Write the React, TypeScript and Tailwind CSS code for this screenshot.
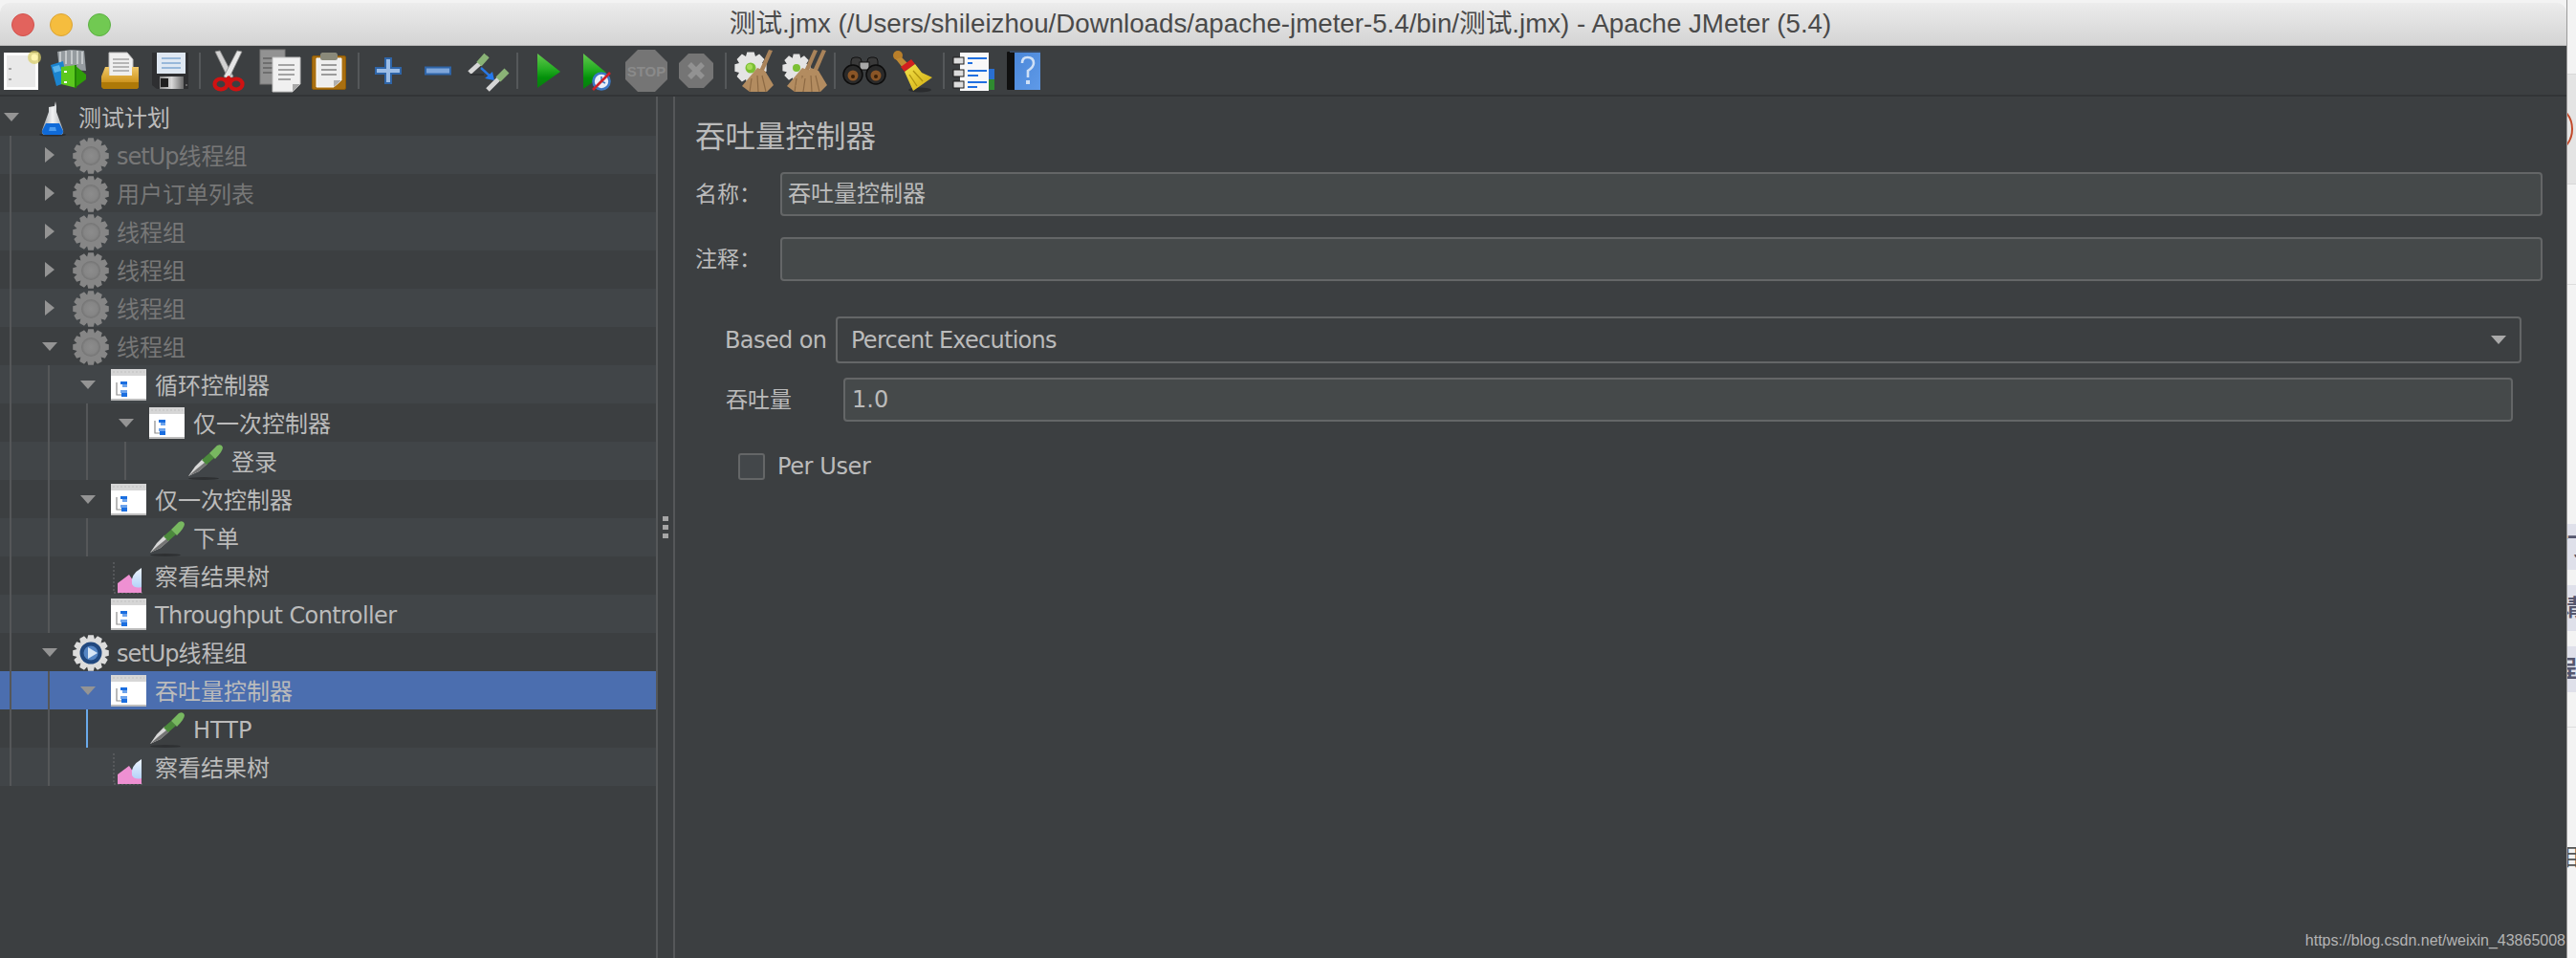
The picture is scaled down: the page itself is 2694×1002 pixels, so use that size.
const Svg = ({ w = 44, h = 44, children }: { w?: number; h?: number; children: React.ReactNode }) => (
  <svg width={w} height={h} viewBox={`0 0 ${w} ${h}`} className="overflow-visible shrink-0">
    {children}
  </svg>
);

function gearPoints(cx: number, cy: number, outer: number, inner: number, teeth = 12) {
  const pts: string[] = [];
  const step = (Math.PI * 2) / teeth;
  for (let i = 0; i < teeth; i++) {
    const a = i * step;
    const offsets = [
      [-0.5, inner],
      [-0.28, outer],
      [0.28, outer],
      [0.5, inner],
    ];
    for (const [o, r] of offsets) {
      const t = a + o * step;
      pts.push(`${(cx + Math.cos(t) * r).toFixed(1)},${(cy + Math.sin(t) * r).toFixed(1)}`);
    }
  }
  return pts.join(" ");
}

const Gradients = () => (
  <svg width="0" height="0" className="absolute">
    <defs>
      <linearGradient id="greenPlay" x1="0" y1="0" x2="0" y2="1">
        <stop offset="0" stopColor="#63c84e" />
        <stop offset="0.45" stopColor="#25ad23" />
        <stop offset="0.7" stopColor="#03900a" />
        <stop offset="1" stopColor="#0a7d10" />
      </linearGradient>
      <linearGradient id="folder" x1="0" y1="0" x2="0" y2="1">
        <stop offset="0" stopColor="#f0c868" />
        <stop offset="0.6" stopColor="#d49c28" />
        <stop offset="1" stopColor="#b57c08" />
      </linearGradient>
      <linearGradient id="metal" x1="0" y1="0" x2="1" y2="0">
        <stop offset="0" stopColor="#8a8a8a" />
        <stop offset="0.5" stopColor="#d8d8d8" />
        <stop offset="1" stopColor="#6a6a6a" />
      </linearGradient>
      <linearGradient id="sweepHead" x1="0" y1="0" x2="1" y2="1">
        <stop offset="0" stopColor="#f4e24a" />
        <stop offset="1" stopColor="#d0ac10" />
      </linearGradient>
      <linearGradient id="leaf" x1="0" y1="0" x2="0" y2="1">
        <stop offset="0" stopColor="#eef5ff" />
        <stop offset="1" stopColor="#b4d2f8" />
      </linearGradient>
      <linearGradient id="helpBook" x1="0" y1="0" x2="1" y2="1">
        <stop offset="0" stopColor="#4a86d8" />
        <stop offset="1" stopColor="#5f9ae8" />
      </linearGradient>
      <linearGradient id="flaskGlass" x1="0" y1="0" x2="1" y2="0">
        <stop offset="0" stopColor="#9a9fa4" />
        <stop offset="0.5" stopColor="#f2f3f4" />
        <stop offset="1" stopColor="#a8acb0" />
      </linearGradient>
      <radialGradient id="disabledHub">
        <stop offset="0" stopColor="#8c8c8c" />
        <stop offset="0.7" stopColor="#858585" />
        <stop offset="1" stopColor="#737373" />
      </radialGradient>
    </defs>
  </svg>
);

const NewIcon = () => (
  <Svg>
    <rect x="7.5" y="4.5" width="33" height="36" fill="#e9e9e9" stroke="#fdfdfd" strokeWidth="3" />
    <circle cx="38" cy="8" r="7" fill="#d9cf6a" opacity="0.75" />
    <circle cx="38" cy="8" r="3.5" fill="#fff6b0" />
    <rect x="11" y="19" width="3" height="2" fill="#a8a8a8" />
    <rect x="11" y="30" width="3" height="2" fill="#a8a8a8" />
  </Svg>
);

const TemplateIcon = () => (
  <Svg>
    <path d="M10 2 L24 0 L38 1 L40 22 L12 20 Z" fill="#969ca0" />
    <path d="M13 2 V15 M19 1 V15 M25 1 V15 M31 1 V15 M36 2 V15" stroke="#c4c8ca" strokeWidth="2" />
    <path d="M3 16 L16 12 L20 34 L9 38 Z" fill="#1b84cf" />
    <path d="M5 18 L12 16 L14 22 L7 24 Z" fill="#5ab4ec" />
    <path d="M14 18 L30 16 V40 L14 36 Z" fill="#5cc81e" />
    <path d="M28 16 L40 26 L40 31 L28 40 Z" fill="#2f9e08" />
    <path d="M28 16 H30 V40 H28 Z" fill="#248407" />
    <rect x="17" y="22" width="3" height="2" fill="#fff" />
    <rect x="17" y="33" width="3" height="2" fill="#fff" />
  </Svg>
);

const OpenIcon = () => (
  <Svg>
    <path d="M12 3 H31 L37 10 V28 H12 Z" fill="#efefef" stroke="#bdbdbd" />
    <path d="M16 10 H33 M16 14 H33 M16 18 H33 M16 22 H33" stroke="#a4a4a4" strokeWidth="1.6" />
    <path d="M8 18 H12 V27 H36 V18 H43 V38 Q43 41 40 41 H8 Q4 41 4 37 V28 Z" fill="url(#folder)" />
    <path d="M4 34 H43 V38 Q43 41 40 41 H8 Q4 41 4 37 Z" fill="#ae7908" />
  </Svg>
);

const SaveIcon = () => (
  <Svg>
    <path d="M5 3 H43 V41 H10 L5 37 Z" fill="#2e2f31" />
    <rect x="10" y="3" width="30" height="22" fill="#dfe8f2" />
    <path d="M15 9 H35 M15 14 H35 M15 19 H35" stroke="#98b8da" strokeWidth="2" />
    <rect x="13" y="28" width="25" height="13" fill="url(#metal)" />
    <rect x="14" y="30" width="8" height="9" fill="#1f1f1f" />
    <rect x="40" y="36" width="2" height="2" fill="#666" />
  </Svg>
);

const CutIcon = () => (
  <Svg>
    <path d="M9 2 L14 1 L28 28 L23 31 Z" fill="#d2d2d2" stroke="#8a8a8a" strokeWidth="0.8" />
    <path d="M37 2 L32 1 L18 28 L23 31 Z" fill="#e6e6e6" stroke="#8a8a8a" strokeWidth="0.8" />
    <ellipse cx="15" cy="36" rx="6.5" ry="5.5" fill="none" stroke="#d01212" strokeWidth="4.2" />
    <ellipse cx="31" cy="36" rx="6.5" ry="5.5" fill="none" stroke="#d01212" strokeWidth="4.2" />
    <path d="M18 31 L23 27 L28 31 L23 34 Z" fill="#d01212" />
  </Svg>
);

const CopyIcon = () => (
  <Svg>
    <rect x="4" y="0" width="26" height="36" fill="#929292" stroke="#7a7a7a" />
    <path d="M7 9 H17 M7 14 H17 M7 19 H17 M7 24 H17" stroke="#6e6e6e" strokeWidth="2" />
    <path d="M17 8 H46 V36 L38 44 H17 Z" fill="#f0f0f0" stroke="#bfbfbf" />
    <path d="M38 44 V36 H46 Z" fill="#a8a8a8" />
    <path d="M23 16 H40 M23 21 H40 M23 26 H40 M23 31 H36" stroke="#a4a4a4" strokeWidth="1.8" />
  </Svg>
);

const PasteIcon = () => (
  <Svg>
    <rect x="6.5" y="6.5" width="35" height="35" rx="1.5" fill="#a96f10" stroke="#8c5a08" />
    <path d="M11 9 H37 V32 L29 39 H11 Z" fill="#eeeeee" stroke="#ffffff" />
    <path d="M29 39 V32 H37 Z" fill="#b0b0b0" />
    <rect x="15" y="3" width="18" height="8" rx="2.5" fill="#8a8a7a" />
    <path d="M16 16 H32 M16 21 H32 M16 26 H32" stroke="#9c9c9c" strokeWidth="1.8" />
  </Svg>
);

const PlusIcon = () => (
  <Svg>
    <path d="M21 9 H27 V19 H37 V25 H27 V35 H21 V25 H11 V19 H21 Z" fill="#9cbde6" stroke="#2f65a8" strokeWidth="2" />
  </Svg>
);

const MinusIcon = () => (
  <Svg>
    <rect x="11" y="18.5" width="26" height="7" fill="#7ea6da" stroke="#2f65a8" strokeWidth="2" />
  </Svg>
);

const ToggleIcon = () => (
  <Svg>
    <path d="M5 24 L16 14" stroke="#d6d6d6" strokeWidth="5" />
    <path d="M15 15 L23 6" stroke="#8ab376" strokeWidth="7" />
    <path d="M6 26 L20 26" stroke="#2c2e30" strokeWidth="2" opacity="0.8" />
    <path d="M17 19 L28 29" stroke="#2a78e4" strokeWidth="2.4" />
    <path d="M31 32 L21 30 L29 23 Z" fill="#2478ec" />
    <path d="M24 42 L36 30" stroke="#d6d6d6" strokeWidth="5" />
    <path d="M35 31 L44 22" stroke="#8ab376" strokeWidth="7" />
  </Svg>
);

const StartIcon = () => (
  <Svg>
    <path d="M14 4 L38 23 L14 40 Z" fill="url(#greenPlay)" />
  </Svg>
);

const StartNoPauseIcon = () => (
  <Svg>
    <path d="M10 4 L34 24 L10 41 Z" fill="url(#greenPlay)" />
    <circle cx="29" cy="33" r="8.5" fill="#e8eef8" stroke="#3b78c4" strokeWidth="2.6" />
    <path d="M29 33 L29 28 M29 33 L33 35" stroke="#3b78c4" strokeWidth="1.6" />
    <path d="M20 42 L38 24" stroke="#cc2228" strokeWidth="2.6" />
  </Svg>
);

const StopIcon = () => (
  <Svg>
    <path d="M15 0 H33 L46 13 V31 L33 44 H15 L2 31 V13 Z" fill="#757575" />
    <text x="24" y="28" textAnchor="middle" fontFamily="Liberation Sans" fontWeight="700" fontSize="15" fill="#8a8a8a">
      STOP
    </text>
  </Svg>
);

const ShutdownIcon = () => (
  <Svg>
    <path d="M16 4 H32 L42 14 V30 L32 40 H16 L6 30 V14 Z" fill="#757575" />
    <path d="M17 15 L31 29 M31 15 L17 29" stroke="#929292" strokeWidth="5.5" />
  </Svg>
);

const BroomOverlay = ({ x = 0 }: { x?: number }) => (
  <g transform={`translate(${x} 0)`}>
    <path d="M38 0 L42 1 L32 24 L28 22 Z" fill="#a9835a" />
    <path d="M26 19 L34 22 L43 37 L36 44 L18 44 L10 38 Z" fill="#b38c60" />
    <path d="M20 30 L18 44 M26 27 L27 44 M31 27 L35 44" stroke="#8d6a44" strokeWidth="1.2" />
  </g>
);

const ClearIcon = () => (
  <Svg>
    <polygon points={gearPoints(19, 19, 17, 13, 8)} fill="#e4e4e4" />
    <circle cx="19" cy="19" r="5.5" fill="#7cc034" />
    <circle cx="18" cy="18" r="3" fill="#a8dc5a" />
    <BroomOverlay />
  </Svg>
);

const ClearAllIcon = () => (
  <Svg>
    <polygon points={gearPoints(15, 19, 15, 11, 8)} fill="#e4e4e4" />
    <circle cx="15" cy="19" r="4" fill="#7cc034" />
    <BroomOverlay x={-5} />
    <BroomOverlay x={4} />
  </Svg>
);

const SearchIcon = () => (
  <Svg>
    <rect x="10" y="8" width="11" height="16" rx="4" fill="#3a3a3a" stroke="#111" />
    <rect x="27" y="8" width="11" height="16" rx="4" fill="#3a3a3a" stroke="#111" />
    <rect x="19" y="13" width="10" height="8" fill="#a8a8a8" stroke="#111" />
    <circle cx="12" cy="26" r="10" fill="#2a2a2a" stroke="#0c0c0c" strokeWidth="1.5" />
    <circle cx="36" cy="26" r="10" fill="#2a2a2a" stroke="#0c0c0c" strokeWidth="1.5" />
    <circle cx="12" cy="27" r="5.5" fill="#8a5526" />
    <circle cx="36" cy="27" r="5.5" fill="#8a5526" />
    <circle cx="12" cy="28" r="2" fill="#3a2008" />
    <circle cx="36" cy="28" r="2" fill="#3a2008" />
  </Svg>
);

const SweepIcon = () => (
  <Svg>
    <ellipse cx="30" cy="42" rx="12" ry="2.5" fill="#2a2c2e" />
    <circle cx="7" cy="6" r="5" fill="#b97f2a" />
    <path d="M5 10 L11 8 L18 15 L12 19 Z" fill="#c08a34" />
    <path d="M10 18 L21 10 L25 15 L14 23 Z" fill="#d21f1f" />
    <path d="M14 23 L25 15 L32 24 L43 29 L23 43 L18 32 Z" fill="url(#sweepHead)" />
    <path d="M19 26 L27 38 M23 22 L33 33" stroke="#b09410" strokeWidth="1.3" />
  </Svg>
);

const LogIcon = () => (
  <Svg>
    <rect x="40" y="20" width="6" height="11" fill="#2a6fd0" />
    <rect x="40" y="31" width="6" height="11" fill="#2f8a30" />
    <rect x="10" y="3" width="30" height="40" fill="#f8f8f8" />
    <rect x="3" y="8" width="11" height="7" fill="#dcdcdc" stroke="#1c1c1c" />
    <rect x="3" y="21" width="11" height="7" fill="#dcdcdc" stroke="#1c1c1c" />
    <rect x="3" y="33" width="11" height="7" fill="#dcdcdc" stroke="#1c1c1c" />
    <path d="M18 9 H38 M18 14 H23 M18 22 H38 M18 27 H29 M18 34 H38 M18 39 H28" stroke="#1f6fe0" strokeWidth="2" />
  </Svg>
);

const HelpIcon = () => (
  <Svg>
    <rect x="7" y="2" width="9" height="40" rx="1" fill="#101010" />
    <rect x="15" y="1" width="27" height="41" fill="url(#helpBook)" />
    <rect x="10" y="1" width="32" height="2" fill="#3a4a60" />
    <path d="M23 14 Q23 8 28.5 8 Q35 8 35 14 Q35 18 29 22 V29" fill="none" stroke="#cfe0f6" strokeWidth="2.6" />
    <rect x="27" y="32" width="4" height="4" fill="#cfe0f6" />
  </Svg>
);

const Gear = ({ disabled }: { disabled?: boolean }) => (
  <Svg w={40} h={40}>
    <polygon points={gearPoints(20, 20, 19, 15)} fill={disabled ? "#868686" : "#dcdcdc"} />
    {disabled ? (
      <circle cx="20" cy="20" r="10" fill="url(#disabledHub)" />
    ) : (
      <>
        <circle cx="20" cy="20" r="11.5" fill="#21487f" />
        <circle cx="20" cy="20" r="7.5" fill="#5585c4" />
        <path d="M17 14 L27 20 L17 26 Z" fill="#d8e6f6" />
      </>
    )}
  </Svg>
);

const Flask = () => (
  <Svg w={40} h={40}>
    <ellipse cx="20" cy="38" rx="14" ry="1.6" fill="#2a2c2e" />
    <path d="M23 3 L24 8 V14 L31 33 Q32 38 28 38 H12 Q8 38 9 33 L16 14 V9 L22 8 Z" fill="url(#flaskGlass)" />
    <path d="M13 26 H27 L31 34 Q31 38 28 38 H12 Q9 38 9 34 Z" fill="#0f6ad8" />
    <path d="M17 30 H23 L24 34 H16 Z" fill="#4c9cf0" />
  </Svg>
);

const ControllerIcon = () => (
  <Svg w={40} h={36}>
    <rect x="1" y="1" width="37" height="33" fill="#ffffff" />
    <rect x="1" y="1" width="37" height="7" fill="#d6d6d6" />
    <path d="M3 4 H36" stroke="#c0c0c0" strokeWidth="1" strokeDasharray="2 2" />
    <rect x="1" y="32" width="37" height="2" fill="#bdbdbd" />
    <path d="M7 15 V28 H13" fill="none" stroke="#8c8c8c" strokeWidth="1.2" />
    <rect x="11" y="14" width="7" height="3" fill="#1a6ee0" />
    <rect x="13" y="17" width="5" height="3" fill="#6ea4ec" />
    <rect x="11" y="23" width="7" height="3" fill="#6ea4ec" />
    <rect x="12" y="26" width="6" height="4" fill="#1a6ee0" />
  </Svg>
);

const Sampler = () => (
  <Svg w={40} h={40}>
    <ellipse cx="18" cy="37.5" rx="16" ry="1.4" fill="#2e3032" />
    <path d="M2 35 L9 25 L17 17 L22 22 L13 30 Z" fill="#d8d8d8" />
    <path d="M2 35 L13 30 L22 22 L20 20 L10 28 Z" fill="#747474" />
    <path d="M16 18 L24 11 L29 16 L21 23 Z" fill="#4c8a3c" />
    <path d="M24 11 L32 3 Q37 1 38 5 Q38 9 30 17 Z" fill="#78b860" />
  </Svg>
);

const Listener = () => (
  <Svg w={40} h={40}>
    <path d="M4 5 V37 H35" fill="none" stroke="#606264" strokeWidth="1.4" strokeDasharray="2 2" />
    <path d="M8 37 V27 L20 18 L26 27 L33 28 V37 Z" fill="#ee90d2" />
    <path d="M23 28 Q21 18 33 11 V31 Q26 33 23 28 Z" fill="url(#leaf)" />
  </Svg>
);

type IconKind = "flask" | "gear" | "gearOff" | "controller" | "sampler" | "listener";

const treeIcons: Record<IconKind, React.ReactNode> = {
  flask: <Flask />,
  gear: <Gear />,
  gearOff: <Gear disabled />,
  controller: <ControllerIcon />,
  sampler: <Sampler />,
  listener: <Listener />,
};

type TreeRow = {
  label: React.ReactNode;
  depth: number;
  icon: IconKind;
  arrow?: "down" | "right";
  disabled?: boolean;
  selected?: boolean;
  blueGuide?: boolean;
};

const setUpLabel = (
  <>
    <span className="tracking-[-1px]">setUp</span>线程组
  </>
);

const rows: TreeRow[] = [
  { label: "测试计划", depth: 0, icon: "flask", arrow: "down" },
  { label: setUpLabel, depth: 1, icon: "gearOff", arrow: "right", disabled: true },
  { label: "用户订单列表", depth: 1, icon: "gearOff", arrow: "right", disabled: true },
  { label: "线程组", depth: 1, icon: "gearOff", arrow: "right", disabled: true },
  { label: "线程组", depth: 1, icon: "gearOff", arrow: "right", disabled: true },
  { label: "线程组", depth: 1, icon: "gearOff", arrow: "right", disabled: true },
  { label: "线程组", depth: 1, icon: "gearOff", arrow: "down", disabled: true },
  { label: "循环控制器", depth: 2, icon: "controller", arrow: "down" },
  { label: "仅一次控制器", depth: 3, icon: "controller", arrow: "down" },
  { label: "登录", depth: 4, icon: "sampler" },
  { label: "仅一次控制器", depth: 2, icon: "controller", arrow: "down" },
  { label: "下单", depth: 3, icon: "sampler" },
  { label: "察看结果树", depth: 2, icon: "listener" },
  { label: <span className="tracking-[-0.6px]">Throughput Controller</span>, depth: 2, icon: "controller" },
  { label: setUpLabel, depth: 1, icon: "gear", arrow: "down" },
  { label: "吞吐量控制器", depth: 2, icon: "controller", arrow: "down", selected: true },
  { label: "HTTP", depth: 3, icon: "sampler", blueGuide: true },
  { label: "察看结果树", depth: 2, icon: "listener" },
];

function Tree() {
  return (
    <div className="w-[686px] shrink-0 pt-[1px]">
      {rows.map((row, i) => {
        const bg = row.selected ? "bg-[#4b6eaf]" : i % 2 === 1 ? "bg-[#414548]" : "bg-[#3c3f41]";
        const text = row.disabled ? "text-[#777777]" : "text-[#bbbbbb]";
        return (
          <div key={i} className={`flex h-[40px] items-stretch pl-[10px] ${bg}`}>
            {Array.from({ length: row.depth }).map((_, g) => (
              <div
                key={g}
                className={`w-[40px] shrink-0 border-l-2 ${
                  row.blueGuide && g === row.depth - 1 ? "border-[#6aa9ea]" : "border-[#555759]"
                }`}
              />
            ))}
            <div className="-ml-[10px] flex w-[24px] shrink-0 items-center justify-center">
              {row.arrow === "down" && (
                <div className="h-0 w-0 border-x-[8px] border-t-[9px] border-x-transparent border-t-[#949494]" />
              )}
              {row.arrow === "right" && (
                <div className="h-0 w-0 border-y-[8px] border-l-[10px] border-y-transparent border-l-[#949494]" />
              )}
            </div>
            <div className="ml-[11px] flex w-[40px] shrink-0 items-center justify-center pt-[2px]">{treeIcons[row.icon]}</div>
            <span className={`ml-[7px] h-[40px] whitespace-nowrap pt-[2px] text-[24px] leading-[40px] ${text}`}>{row.label}</span>
          </div>
        );
      })}
    </div>
  );
}

function ToolButton({ children }: { children: React.ReactNode }) {
  return <div className="flex w-[40px] shrink-0 items-center justify-center">{children}</div>;
}

const ToolSep = () => <div className="-mx-[2px] h-[38px] w-[2px] shrink-0 translate-x-[2px] bg-[#55585a]" />;

function Toolbar() {
  const groups = [
    [<NewIcon />, <TemplateIcon />, <OpenIcon />, <SaveIcon />],
    [<CutIcon />, <CopyIcon />, <PasteIcon />],
    [<PlusIcon />, <MinusIcon />, <ToggleIcon />],
    [<StartIcon />, <StartNoPauseIcon />, <StopIcon />, <ShutdownIcon />],
    [<ClearIcon />, <ClearAllIcon />],
    [<SearchIcon />, <SweepIcon />],
    [<LogIcon />, <HelpIcon />],
  ];
  return (
    <div className="flex h-[53px] items-center gap-[12px] border-b-2 border-[#323436] bg-[#3c3f41]">
      {groups.map((group, i) => (
        <div key={i} className="contents">
          {i > 0 && <ToolSep />}
          {group.map((icon, j) => (
            <ToolButton key={j}>{icon}</ToolButton>
          ))}
        </div>
      ))}
    </div>
  );
}

function Form() {
  const inputBox = "h-[46px] rounded-[4px] border-2 border-[#646667] bg-[#45494a]";
  return (
    <div className="min-w-0 flex-1 text-[#bbbbbb]">
      <div className="pl-[21px] pt-[22px] text-[31.5px] leading-[40px]">吞吐量控制器</div>
      <div className="mt-[17px] flex items-center pl-[21px] pr-[25px]">
        <span className="w-[89px] shrink-0 text-[23px]">名称：</span>
        <div className={`flex flex-1 items-center pl-[6px] text-[24px] ${inputBox}`}>吞吐量控制器</div>
      </div>
      <div className="mt-[22px] flex items-center pl-[21px] pr-[25px]">
        <span className="w-[89px] shrink-0 text-[23px]">注释：</span>
        <div className={`flex-1 ${inputBox}`} />
      </div>
      <div className="mt-[37px] flex items-center pl-[52px] pr-[47px]">
        <span className="w-[116px] shrink-0 text-[24px] tracking-[-0.6px]">Based on</span>
        <div className="flex h-[49px] flex-1 items-center justify-between rounded-[4px] border-2 border-[#646667] pl-[14px] pr-[14px] text-[24px]">
          <span className="tracking-[-0.75px]">Percent Executions</span>
          <div className="h-0 w-0 border-x-[8px] border-t-[9px] border-x-transparent border-t-[#aaaaaa]" />
        </div>
      </div>
      <div className="mt-[15px] flex items-center pl-[53px] pr-[56px]">
        <span className="w-[123px] shrink-0 text-[23px]">吞吐量</span>
        <div className={`flex flex-1 items-center pl-[7px] text-[24px] ${inputBox}`}>1.0</div>
      </div>
      <div className="mt-[33px] flex items-center pl-[66px]">
        <div className="h-[28px] w-[28px] rounded-[3px] border-2 border-[#646667] bg-[#43474a]" />
        <span className="ml-[13px] text-[24px] leading-[28px] tracking-[-0.4px]">Per User</span>
      </div>
    </div>
  );
}

// the page behind the window, only a 10px sliver of it is visible
function BehindWindow() {
  return (
    <div className="w-[10px] shrink-0 overflow-hidden border-l border-[#9a9a9a] bg-[#f3f3f3] [font-family:'Liberation_Sans','Noto_Sans_CJK_SC',sans-serif] text-[#55576e]">
      <div className="h-[78px] border-b border-[#d8d8d8]" />
      <div className="flex h-[115px] items-center border-b border-[#d8d8d8] bg-[#e4e4e4]">
        <div className="-ml-[50px] h-[56px] w-[56px] shrink-0 rounded-full border-2 border-[#c2492a]" />
      </div>
      <div className="h-[105px] border-b border-[#dddddd]" />
      <div className="h-[250px]" />
      <div className="flex h-[48px] items-center bg-[#dfe0ea] text-[24px] font-bold">
        <span className="-ml-[8px]">门</span>
      </div>
      <div className="mt-[16px] flex h-[48px] items-center bg-[#dfe0ea] text-[24px] font-bold">
        <span className="-ml-[8px]">请</span>
      </div>
      <div className="mt-[16px] flex h-[48px] items-center bg-[#dfe0ea] text-[24px] font-bold">
        <span className="-ml-[14px]">程</span>
      </div>
      <div className="mt-[36px] border-b border-[#dddddd]" />
      <div className="mt-[118px] text-[24px] text-[#555555]">
        <span className="-ml-[12px] block">相</span>
      </div>
    </div>
  );
}

export default function App() {
  return (
    <div className="relative flex h-[1002px] w-[2694px] overflow-hidden bg-[#f3f3f3] [font-family:'DejaVu_Sans','Noto_Sans_CJK_SC',sans-serif]">
      <Gradients />
      <div className="mt-[3px] flex min-w-0 flex-1 flex-col overflow-hidden rounded-t-[10px]">
        <div className="relative flex h-[45px] shrink-0 items-center justify-center border-b border-[#b9b9b9] bg-gradient-to-b from-[#ececec] to-[#d4d4d4] pr-[6px] [font-family:'Liberation_Sans','Noto_Sans_CJK_SC',sans-serif] text-[27.7px] text-[#4a4a4a]">
          <div className="absolute left-[12px] top-[11px] flex gap-[16px]">
            <div className="h-[24px] w-[24px] rounded-full border border-[#d2514c] bg-[#e2635d]" />
            <div className="h-[24px] w-[24px] rounded-full border border-[#dba435] bg-[#f5bd3e]" />
            <div className="h-[24px] w-[24px] rounded-full border border-[#5cb043] bg-[#71c952]" />
          </div>
          测试.jmx (/Users/shileizhou/Downloads/apache-jmeter-5.4/bin/测试.jmx) - Apache JMeter (5.4)
        </div>
        <Toolbar />
        <div className="flex min-h-0 flex-1 bg-[#3c3f41]">
          <Tree />
          <div className="flex w-[20px] shrink-0 items-center justify-center border-x-2 border-[#555759]">
            <div className="flex flex-col gap-[4px]">
              <div className="h-[5px] w-[6px] bg-[#a6a6a6]" />
              <div className="h-[5px] w-[6px] bg-[#a6a6a6]" />
              <div className="h-[5px] w-[6px] bg-[#a6a6a6]" />
            </div>
          </div>
          <Form />
        </div>
      </div>
      <BehindWindow />
      <div className="absolute bottom-[8px] right-[11px] [font-family:'Liberation_Sans',sans-serif] text-[16px] leading-[20px] text-[#b4b4b4]">
        https://blog.csdn.net/weixin_43865008
      </div>
    </div>
  );
}
